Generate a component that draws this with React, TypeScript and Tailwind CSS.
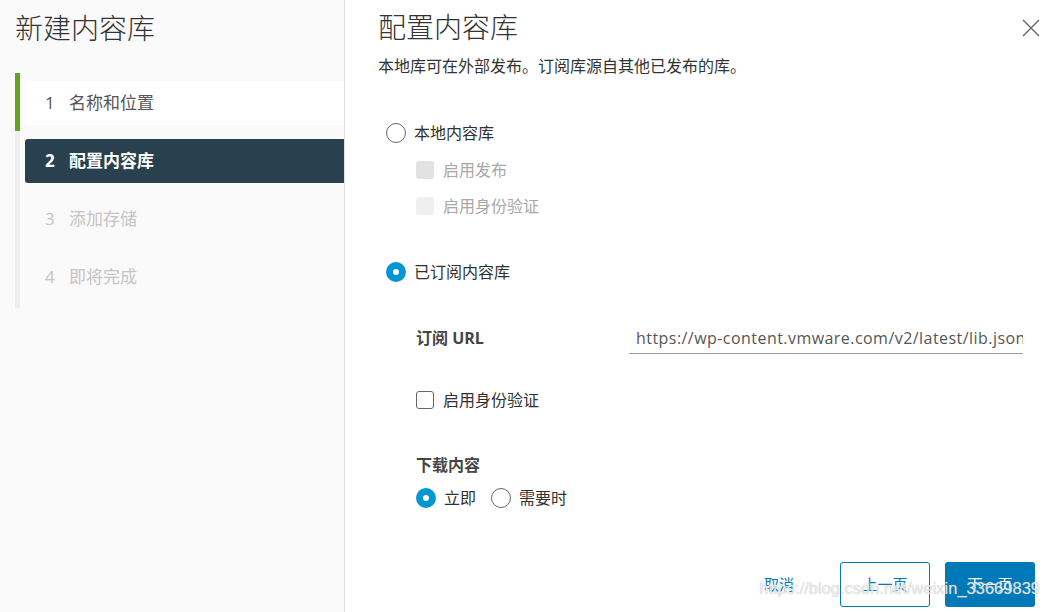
import React from "react";

const font = { fontFamily: '"Open Sans", "Noto Sans CJK SC", sans-serif' };

function Radio({ checked, label }: { checked?: boolean; label: string }) {
  return (
    <label className="flex items-center h-[22px]">
      <span
        className={
          checked
            ? "w-[20px] h-[20px] rounded-full border-[7px] border-[#0095d3] bg-white"
            : "w-[20px] h-[20px] rounded-full border border-[#666] bg-white"
        }
      />
      <span className="ml-[8px] text-[16px] text-[#313131]">{label}</span>
    </label>
  );
}

function Checkbox({ label, tone }: { label: string; tone: "on" | "dis1" | "dis2" }) {
  const box =
    tone === "on"
      ? "border border-[#666] bg-white"
      : tone === "dis1"
      ? "bg-[#e2e2e2]"
      : "bg-[#efefef]";
  const text = tone === "on" ? "text-[#313131]" : "text-[#a8a8a8]";
  return (
    <label className="flex items-center h-[22px]">
      <span className={`w-[18px] h-[18px] rounded-[3px] ${box}`} />
      <span className={`ml-[9px] text-[16px] ${text}`}>{label}</span>
    </label>
  );
}

function Steps() {
  const rest = [
    { n: "2", t: "配置内容库", active: true },
    { n: "3", t: "添加存储" },
    { n: "4", t: "即将完成" },
  ];
  return (
    <div className="ml-[15px] mt-[26px]">
      <div className="border-l-[5px] border-[#62a420] pt-[8px] pb-[6px] pl-[5px]">
        <div className="h-[44px] bg-white rounded-l-[3px] flex items-center pl-[20px] text-[17px] text-[#565656]">
          <span className="w-[24px]">1</span>
          <span>名称和位置</span>
        </div>
      </div>
      <div className="border-l-[5px] border-[#eeeeee] pt-[8px] pb-[9px] pl-[5px] flex flex-col gap-[14px]">
        {rest.map((s) =>
          s.active ? (
            <div
              key={s.n}
              className="h-[44px] bg-[#29414e] rounded-l-[3px] flex items-center pl-[20px] text-[17px] text-white font-bold"
            >
              <span className="w-[24px]">{s.n}</span>
              <span>{s.t}</span>
            </div>
          ) : (
            <div key={s.n} className="h-[44px] flex items-center pl-[20px] text-[17px] text-[#c4c4c4]">
              <span className="w-[24px]">{s.n}</span>
              <span>{s.t}</span>
            </div>
          )
        )}
      </div>
    </div>
  );
}

export default function App() {
  return (
    <div className="relative flex w-[1049px] h-[612px] bg-white overflow-hidden" style={font}>
      <div className="w-[345px] shrink-0 bg-[#fafafa] border-r border-[#e2e2e2]">
        <h1 className="pl-[15px] pt-[9px] text-[28px] leading-[38px] font-light text-[#333]">新建内容库</h1>
        <Steps />
      </div>

      <div className="relative flex-1 flex flex-col pl-[33px]">
        <button className="absolute top-[17px] right-[7px] w-[22px] h-[22px] flex items-center justify-center">
          <svg width="20" height="20" viewBox="0 0 20 20" fill="none" stroke="#666" strokeWidth="1.4">
            <path d="M2 2 L18 18 M18 2 L2 18" />
          </svg>
        </button>

        <h2 className="pt-[8px] text-[28px] leading-[38px] font-light text-[#333]">配置内容库</h2>
        <p className="mt-[9px] text-[16px] leading-[22px] text-[#333]">本地库可在外部发布。订阅库源自其他已发布的库。</p>

        <div className="mt-[45px] ml-[8px]">
          <Radio label="本地内容库" />
        </div>
        <div className="ml-[38px] mt-[15px] flex flex-col gap-[14px]">
          <Checkbox label="启用发布" tone="dis1" />
          <Checkbox label="启用身份验证" tone="dis2" />
        </div>

        <div className="mt-[44px] ml-[8px]">
          <Radio checked label="已订阅内容库" />
        </div>

        <div className="ml-[38px] mt-[39px] flex items-center">
          <span className="w-[213px] text-[16px] font-bold text-[#454545]">订阅 URL</span>
          <div className="w-[394px] h-[32px] border-b border-[#9a9a9a] flex items-center px-[7px] overflow-hidden">
            <span className="whitespace-nowrap text-[16px] tracking-[0.45px] text-[#565656]">
              https://wp-content.vmware.com/v2/latest/lib.json
            </span>
          </div>
        </div>

        <div className="ml-[38px] mt-[35px]">
          <Checkbox label="启用身份验证" tone="on" />
        </div>

        <div className="ml-[38px] mt-[43px] text-[16px] leading-[22px] font-bold text-[#454545]">下载内容</div>
        <div className="ml-[38px] mt-[11px] flex items-center gap-[15px]">
          <Radio checked label="立即" />
          <Radio label="需要时" />
        </div>

        <div className="mt-auto mb-[5px] flex justify-end pr-[14px] gap-[15px]">
          <button className="w-[90px] h-[45px] text-[15px] text-[#0079b8] mr-[1px]">取消</button>
          <button className="w-[90px] h-[45px] rounded-[3px] border border-[#0079b8] text-[15px] text-[#0079b8] bg-white">
            上一页
          </button>
          <button className="w-[90px] h-[45px] rounded-[3px] bg-[#0079b8] text-[15px] text-white">下一页</button>
        </div>
      </div>

      <div
        className="absolute right-[9px] bottom-[11px] text-[16.5px] text-white/70 [text-shadow:0_0_1px_#b0b0b0]"
        style={{ fontFamily: '"Liberation Sans", Arial, sans-serif' }}
      >
        https://blog.csdn.net/weixin_33669839
      </div>
    </div>
  );
}
